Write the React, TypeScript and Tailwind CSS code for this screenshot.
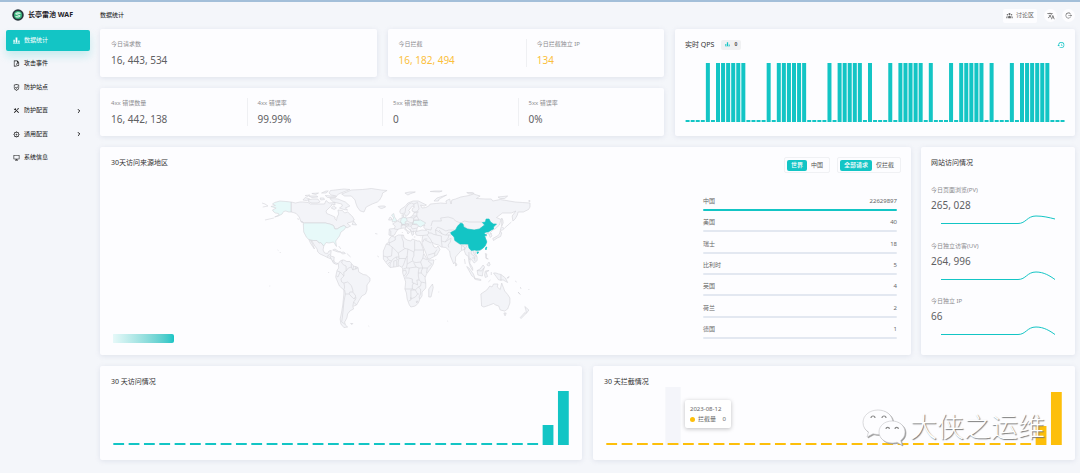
import type { ReactNode } from 'react'
import clsx from 'clsx'
import { HiUserGroup } from 'react-icons/hi'
import { MdHistory, MdTranslate } from 'react-icons/md'
import { RiFileShield2Line, RiLogoutCircleRLine, RiSettings5Line, RiShieldCheckLine, RiToolsFill, RiComputerLine } from 'react-icons/ri'
import { LuChevronRight } from 'react-icons/lu'

const TEAL = '#13c5c5'
const AMBER = '#fdbf0b'

function BarsIcon({ className }: { className?: string }) {
  return (
    <svg viewBox="0 0 16 16" className={className} fill="currentColor" aria-hidden="true">
      <path d="M1 6h3v7H1zM6 1h4v12H6zM12 8h3v5h-3zM0 14h16v1.5H0z" />
    </svg>
  )
}

const NAV: { label: string; icon: ReactNode; expandable?: boolean }[] = [
  { label: '数据统计', icon: <BarsIcon className="size-[7px]" /> },
  { label: '攻击事件', icon: <RiFileShield2Line className="size-[7px]" /> },
  { label: '防护站点', icon: <RiShieldCheckLine className="size-[7px]" /> },
  { label: '防护配置', icon: <RiToolsFill className="size-[7px]" />, expandable: true },
  { label: '通用配置', icon: <RiSettings5Line className="size-[7px]" />, expandable: true },
  { label: '系统信息', icon: <RiComputerLine className="size-[7px]" /> },
]

const REGIONS = [
  { name: '中国', count: 22629897 },
  { name: '美国', count: 40 },
  { name: '瑞士', count: 18 },
  { name: '比利时', count: 5 },
  { name: '英国', count: 4 },
  { name: '荷兰', count: 2 },
  { name: '德国', count: 1 },
]

const QPS_SAMPLES =
  '000010111111000010111111000010111110100010111110100010111110100010111111000'.split('')

const VISITS = [...Array(28).fill(2), 20, 54]
const BLOCKED = [...Array(28).fill(2), 19, 53]

const SITE_STATS = [
  { label: '今日页面浏览(PV)', value: '265, 028', curve: 'M0 11.500H77C85 11.500 86 4 95 4C102 4 108 5.500 114 7' },
  { label: '今日独立访客(UV)', value: '264, 996', curve: 'M0 11.500H77C85 11.500 86 4 95 4C103 4 109 8 114 11.500' },
  { label: '今日独立 IP', value: '66', curve: 'M0 11.500H77C85 11.500 86 4 95 4C103 4 109 8 114 11.500' },
]

// Land outlines, "lon,lat" pairs
const LAND = [
  // Canada and its islands
  '-141,70 -141,60 -138,59.5 -134,58.5 -130,55 -128,51 -123,49 -95,49 -89,48 -84,46.5 -82,43 -79,43 -75,45 -70,46.5 -67,45 -66,44 -61,46 -65,48 -65,49 -60,50 -56,52 -58,55 -62,58 -65,60 -69,59 -72,61.5 -78,62 -77,58 -79,55 -80,51.5 -82,53 -82,55 -88,57 -93,58.5 -94,61 -90,64 -87,66 -86,68 -82,67 -82,69.5 -90,69 -94,71.5 -96,68 -102,68 -108,68 -115,68 -118,69.5 -125,70 -129,70 -135,69',
  '-117,70 -118,72 -112,73 -105,73 -102,70 -106,69 -113,69',
  '-125,72 -122,74.5 -116,73 -120,71.5',
  '-62,66 -68,70 -78,73 -89,73.5 -84,70 -73,68 -72,66 -76,64 -70,62.5 -65,62 -68,64',
  '-62,82.5 -70,83 -88,81.5 -90,79 -87,77 -80,76 -77,78 -74,79',
  '-95,76.5 -80,75.5 -81,74.5 -92,74.5',
  '-117,76 -106,76 -105,75 -113,74.5',
  '-102,74 -97,74 -96,72.5 -101,72',
  '-100,79 -94,81 -91,81 -94,79',
  '-122,76.5 -116,77 -119,75.5',
  '-113,78.5 -104,79 -108,77.5',
  '-87,64 -84,66 -80,64 -83,62.5',
  '-59,47.5 -57,51 -53,47',
  '-128,50.5 -125,50 -124,48.5',
  // Greenland, Iceland, Svalbard
  '-73,78 -66,80 -60,82 -45,82.5 -33,83.5 -20,82 -12,81.5 -18,79 -19,76 -22,72 -25,70 -32,68 -40,65 -43,60 -48,61 -52,65 -54,69 -55,72 -60,76 -69,76',
  '-24,65.5 -20,66 -15,66 -14,65 -19,63.5 -22,64',
  '12,79 18,80 26,80 20,78.5 16,77',
  '46,80.5 52,81 62,81 58,80',
  // Mexico and Central America
  '-117,32.5 -111,31.5 -106,31.5 -103,29 -101,29.5 -97,26 -98,22 -96,19 -92,18.5 -90,21 -87,21.5 -88,16 -83,15 -83.5,11 -81,9 -77.5,8.5 -80,7.5 -84,9 -87,13 -92,14.5 -96,16 -102,18 -105,20 -106,23 -109,26 -113,31 -114.500,31.500 -112,28 -109.500,23 -112,25.500 -115,29',
  '-85,22 -82,23 -77,20.5 -74,20 -78,20',
  '-74,19.500 -70,20 -68,18.500 -72,18',
  // South America
  '-77.500,8.500 -75,11 -72,12 -70,12 -66,10.500 -62,10.500 -57,6 -51,4.500 -50,0 -44,-2.500 -40,-3 -35,-6 -35,-9 -39,-13 -39,-18 -41,-22 -46,-24 -48.500,-27 -53,-33 -58,-34.500 -57,-37 -62,-39 -65,-42 -66,-46 -69,-50 -68,-53 -65,-55 -70,-55.500 -74,-52 -75,-47 -73,-40 -71.500,-33 -70,-22 -70,-18 -76,-14 -80,-7 -81,-5 -80,-1 -79,2 -77,4',
  '-61,-51.500 -58,-51.500 -59,-52.500',
  // Europe and Asia
  '-9.500,37 -9,43 -2,43.500 -1,46 -4.500,48 -1.500,49.500 2,51 5,53.500 8.500,54 8,57 10.500,57.500 10,55 14,54 19,54.500 21,56 24,58 24,59.500 30,60 25,60 21.500,61 22,63.500 25,65 22,66 17,61.500 19,60 16,57 13,55.500 11,59 7,58 5,60 6,62.500 12,65.500 16,69 23,71 30,71 41,67 38,66 33,67 35,64 40,64.500 44,66 46,68 54,68.500 60,69 68,68.500 67,71 72,73 74,68 75,72 80,73 87,75 98,76.500 104,78 113,76 108,73.500 120,73 128,73 130,71 140,72.500 152,71 160,70 170,69.500 180,69 180,65 178,62.500 171,60 164,60 163,57 160,53 157,51 156,56 161,61 155,59 143,59 135,54.500 141,52.500 139,47 133,43 130,42 127,39.500 129,36 126.500,34.500 125,38 121,39 122,41 118,39 119,37 122,37 120,34 122,31 120,26 116,23 110,20.500 106,20 109,15 109,11.500 105,9 103,11 100,13.500 99,9 103,4 103,1.500 100,5 98,10 97,16 94,17 91,22.500 87,21 80,15 80,11 77.500,8 73,16 72,21 67,24.500 61,25 57,27 52,28 48,30 51,25 54,24 56.500,26 59,22.500 55,17 45,13 43,13 39,21 35,28 35,32 36,36.500 30,36.500 27,37 26,40 30,41 35,42 41,41.500 37,45 39,47 33,46 30,46 28,43 28,41 23,40.500 24,38 22,36.500 19,42 14,45 12,45 14,42 18.500,40 16,38 15,40.500 10,44 3,43 0,40 -2,37 -5.500,36',
  '-10,52 -8,55 -6,54 -6,52',
  '51,71 55,74 68,77 58,73 57,71',
  '95,79.500 103,79.500 105,78.500 98,78',
  '137,75 150,76 146,73.500 140,73.500',
  '178,71 180,71.500 180,70.500',
  '142,46 142,54 143.500,52 144,49',
  '140,41.500 141.500,45.500 145.500,43.500 143,42',
  '140,41 142,39 140.500,35.500 136,34 131,31.500 130,33.500 136,36 139,38',
  '80,9.500 82,7 80,6',
  '44,-25 47,-25 50,-15.500 49,-12 44,-17',
  // South-east Asia and Oceania
  '95,5.500 98,4 104,-2 106,-6 102,-4',
  '105,-6.500 108,-6.500 114,-7.500 114,-8.500 107,-7.500',
  '109,1.500 113,3 117,7 119,5 117,1 116,-4 110,-3',
  '120,1 125,1.500 121,0 123,-4.500 120,-5.500 119,-3',
  '120,18.500 122,18 121,14 124,13 121,13.500',
  '122,7 125,10 126.500,7 125,6',
  '131,-1 134,-1 138,-2 141,-2.500 147,-6 150,-10.500 144,-8 138,-8 134,-4',
  '149,-6 152,-4.500 151,-6',
  '114,-22 122,-18 126,-14 129,-15 131,-12 137,-12 136,-15 140,-17.500 142,-11 146,-19 150,-22.500 153,-26 153,-31 150,-37 146,-39 140,-38 138,-34 134,-33 131,-31.500 124,-33.500 118,-35 115,-34',
  '145,-41 148,-41 147,-43.500 146,-43.500',
  '173,-34.500 178.500,-38 175,-41.500 174.500,-38',
  '173,-40.500 174,-42 168,-46.500 167,-45.500',
  '164,-20 167,-22.500 166,-22',
  // Africa
  '-17,15 -17,21 -13,28 -9.500,30 -9.500,32.500 -6,36 -2,35 3,37 10,37 11,34 15,32 20,31 22,33 29,31 32,31 34,28 37,22 37,19 40,15 43,12 51,12 50,8 46,3 41,-2 39,-6 40,-11 40,-16 35,-20 35,-24 32,-27 30,-31 26,-34 20,-35 18,-33 15,-27 14,-21 12,-17 13,-10 9,-1 9,4 5,6 -2,5 -8,4.500 -13,9 -17,13',
]

const BORDERS = [
  // Americas
  '-92,14.5 -91,17 -89,17.500', '-89,16 -87,13', '-83,11 -86,11', '-83,9.500 -83,8.500',
  '-72,12 -73,9 -70,7 -67,6 -67,1 -70,0 -70,-4 -75,0 -79,1', '-60,8 -60,5 -64,4 -67,1', '-57,6 -58,2 -52,4 -51,4', '-60,5 -58,2', '-54,6 -54,2.500',
  '-70,-4 -74,-7 -73,-10 -70,-11 -69,-15 -70,-18', '-70,-11 -65,-10 -60,-13.500 -58,-18 -58,-20 -62,-20 -63,-22 -68,-22 -69,-18',
  '-58,-20 -54,-24 -56,-27 -58,-26 -63,-22', '-54,-25 -54,-27 -57,-30 -58,-34', '-57,-30 -53,-33', '-68,-22 -70,-30 -71,-38 -72,-45 -73,-50 -69,-52', '-80,-4 -78,-5 -75,0',
  // Africa
  '-13,28 -9,27 -9,30', '-9,27 -5,25 -6,16 -12,15 -17,16', '-5,25 3,19 12,23.500 16,23 24,20 25,22 37,22', '25,22 25,31.500', '-1,35 -1,32 -9,29', '8,37 8,34 10,30 10,25 12,23.500',
  '3,19 4,15 0,15 -4,13 -6,11 -10,12 -12,15', '16,23 15,16 13,13.500 4,13.500 4,15', '24,20 24,16 22,13 23,10 27,9.500 33,10 36,14 37,18', '15,16 15,8 14,4 10,3', '13,13.500 10,7 8,5', '4,13.500 3,10 3,6', '1,11 1,6', '-3,11 -3,5', '-6,11 -8,8 -8,5', '-11,12 -13,10', '-8,10 -11,8', '0,15 2,12 -3,11',
  '15,8 22,11', '14,4 18,4 27,5 24,9', '27,5 31,4 36,4 34,8 33,10', '36,14 42,12', '36,4 42,4 48,8 43,11', '42,4 41,-1', '36,4 34,1 34,-1 39,-5', '31,4 30,0 30,-4 31,-8', '34,-1 30,-1',
  '18,4 17,-1 13,-5', '9,1 13,2 14,-1 11,-4', '12,-6 17,-6 22,-7 22,-11 24,-11 22,-13 22,-17 12,-17', '24,-11 29,-13 28,-8 31,-8 34,-10 40,-11', '34,-10 33,-14 30,-15 26,-18 22,-17', '30,-15 33,-17 33,-22 31,-25 32,-27', '26,-18 29,-22 31,-22', '29,-22 26,-25 20,-27 20,-18 25,-18', '20,-25 20,-28 17,-29', '27,-29.500 29,-29 28,-31 27,-29.500',
  // Europe
  '-9,42 -7,41 -7,37', '-2,43 3,42.500', '2,51 6,49.500 8,49 7,46 7,44', '7,46 10,47 13,46.500 14,45', '8,47.500 13,47.500 17,48 16,46 13,46', '15,51 19,49.500 23,49 24,54 19,54.500', '13,49 17,48 22,48 28,47', '16,46 20,46 22,43 28,44', '20,46 23,48', '19,43 21,40 24,41', '23,52 31,52 28,56 22,56', '28,56 28,59', '24,54 28,56', '21,69 24,68 24,66', '12,59 13,64 17,68 21,69', '24,68 29,69.500 30,66 31,63 28,60.500',
  // Middle East and Central Asia
  '36,36.500 42,37 44,39 43,41', '42,37 47,32 48,30', '44,39 48,39 49,38 54,37 61,36 61,31 62,25', '40,43 47,42 48,45', '42,33 38,33 36,30', '39,32 47,29', '43,17 52,19 55,22.500', '52,19 52,16', '54,37 53,42 56,41 62,38 66,37 71,37 74,37',
  '47,46 49,51 55,51 61,51 60,54 70,55 77,53.500 80,51 87,49', '53,42 56,45 62,43 67,41 71,42 80,42', '62,38 58,42', '67,37 71,40 74,39', '61,31 66,30 70,34 71,37', '66,30 74,34 73,30 70,27 71,24.500', '81,30 88,27 88,22', '88,27 92,27 97,28', '89,26 92,25 92,22', '92,22 95,26 97,28',
  '87,49 92,51 98,50 105,50 116,50', '88,49 96,43 105,42 112,43 119,47', '98,20 98,16 99,12', '101,21 101,18 105,16 106,11', '103,22 105,18 108,15', '102,14 107,14', '109,1.500 115,1 118,4', '141,-2.500 141,-9', '126,38 128.500,38.500',
]

const TINTED = [
  // Alaska, mainland United States, United Kingdom, Germany, Ukraine
  '-141,60 -141,70 -148,70.5 -156,71 -163,69.5 -166,68 -162,66.5 -168,65.5 -161,64 -166,62 -164,60 -162,59 -158,58.5 -157,57 -163,55 -158,56 -153,58 -151,60.5 -148,61 -144,60',
  '-124.500,48 -123,49 -95,49 -89,48 -84,46.500 -82,43 -79,43 -75,45 -70,46.500 -67,45 -70,42 -74,40 -76,36 -81,31 -80,25.500 -82,28 -84,30 -90,29 -94,29.500 -97,26 -101,29.500 -103,29 -106,31.500 -111,31.500 -117,32.500 -120,34.500 -124,40',
  '-5,50 1,51 0,53 -2,55 -3,58.500 -6,57 -3,54 -5,52',
  '6,50 7,53.500 10,54.500 14,54 15,51 12,50 13,48 8,47.500',
  '22,48 24,51.500 33,52 40,49 37,47 33,45 30,46 28,48',
]

const CHINA = [
  '73.500,39.500 74,38 78,35 79,31.500 82,30 86,28 92,28 97,28 98,24 101,21.500 106,22 108,21.500 113,22 117,24 120,26.500 122,30 120,34 119,36 122,37 118,38.500 121,40 124,40 128,42 131,43 131,45 135,48 131,48 127,50 125,53 121,53 120,50 116,49.500 119,47 112,43 105,42 96,43 91,45 90,48 87,49 84,47 82,45 80,42',
  '109,20 111,20 110,18.500 109,18.500',
  '120,23 121,25 122,25 121,22',
]

const ISLETS = [
  '-156,20 -155,19', '-159,22 -158,21.500', '-170,-14 -169,-14', '-91,0 -90,-1', '-176,52 -170,53 -164,54', '178,-17 179,-18', '160,-9 162,-10', '167,-15 168,-17', '-66,18.500 -61,15', '-25,16 -23,15', '-28,38.500 -25,38', '57,-20 58,-20', '69,-49 70,-49.500', '-37,-54 -36,-54.500', '8,40 9,39', '24,35 26,35', '33,35 34,35', '53,12.500 54,12.500', '92,13 93,8', '127,-8 124,-10', '128,0 128,-3', '146,44 155,50', '-179,65 -172,66 -176,68 -180,69', '-132,54 -131,52', '-77,26 -74,23',
]

function WorldMap() {
  return (
    <svg viewBox="-180 -83 360 140" preserveAspectRatio="none" className="block w-[268px] h-[140px] overflow-visible" role="img" aria-label="世界地图">
      <g transform="scale(1 -1)" stroke="#d3d4d8" strokeWidth={0.6} strokeLinejoin="round">
        {LAND.map((points) => (
          <polygon key={points} points={points} fill="#f3f4f8" vectorEffect="non-scaling-stroke" />
        ))}
        {TINTED.map((points) => (
          <polygon key={points} points={points} fill="#e7f9f9" vectorEffect="non-scaling-stroke" />
        ))}
        {[...BORDERS, ...ISLETS].map((points) => (
          <polyline key={points} points={points} fill="none" vectorEffect="non-scaling-stroke" />
        ))}
        {CHINA.map((points) => (
          <polygon key={points} points={points} fill={TEAL} stroke={TEAL} vectorEffect="non-scaling-stroke" />
        ))}
      </g>
    </svg>
  )
}

function Card({ className, children }: { className?: string; children: ReactNode }) {
  return (
    <section className={clsx('min-w-0 rounded-xs bg-[#fdfdff] shadow-[0_1px_5px_rgba(140,150,180,0.2)]', className)}>
      {children}
    </section>
  )
}

function CardTitle({ children }: { children: ReactNode }) {
  return <h2 className="text-[7px] leading-[11px] text-[#333]">{children}</h2>
}

type Stat = { label: string; value: string }

function StatCard({ stats, warn }: { stats: Stat[]; warn?: boolean }) {
  return (
    <Card className="grid auto-cols-fr grid-flow-col px-[11px] py-[10px]">
      {stats.map((stat, i) => (
        <div key={stat.label} className={clsx('h-7', i > 0 && 'pl-[10px] border-l border-[#eff0f3]')}>
          <div className="pt-px text-[6px] leading-[8px] text-[#8c8c90]">{stat.label}</div>
          <div className={clsx('mt-[5px] text-[10px] leading-[14px]', warn ? 'text-[#fbbf3c]' : 'text-[#5f6063]')}>{stat.value}</div>
        </div>
      ))}
    </Card>
  )
}

function DayChart({ values, color, hover }: { values: number[]; color: string; hover?: number }) {
  return (
    <svg viewBox="0 0 460 58" preserveAspectRatio="none" className="block w-full h-[58px]" aria-hidden="true">
      {hover !== undefined && <rect x={(hover * 460) / 30} width={460 / 30} height={58} fill="#f4f5fa" />}
      {values.map((v, i) => (
        <rect key={i} x={(i * 460) / 30 + 2.3} y={58 - v} width={10.8} height={v} fill={color} />
      ))}
    </svg>
  )
}

function Switcher({ options }: { options: string[] }) {
  return (
    <div className="flex h-4 items-center rounded-xs border border-[#f0f1f4] px-[2px] text-[6px] leading-[8px]">
      {options.map((option, i) => (
        <button
          key={option}
          type="button"
          className={clsx('h-[11px] rounded-xs px-1', i === 0 ? 'bg-[#13c5c5] font-medium text-white' : 'text-[#555]')}
        >
          {option}
        </button>
      ))}
    </div>
  )
}

function Sidebar() {
  return (
    <aside className="w-[95px] shrink-0 pl-[6px] pr-[5px]">
      <div className="flex h-[26px] items-center gap-1 pl-[6px] text-[7px] font-bold text-[#1f2329]">
        <svg viewBox="0 0 24 24" className="size-3" aria-hidden="true">
          <circle cx="12" cy="12" r="11.5" fill="#26323a" />
          <circle cx="12" cy="12" r="8" fill="#35b27a" />
          <path d="M6 10c2-4 9-5 12-1l-4 1c-2-1-4-1-5 0l8 3c0 4-8 6-11 2l4-1c2 1 3 1 4 0z" fill="#d9f5e6" />
        </svg>
        长亭雷池 WAF
      </div>
      <nav className="mt-[2px] flex h-[138px] flex-col justify-between">
        {NAV.map((item, i) => (
          <a
            key={item.label}
            href="#"
            className={clsx(
              'flex h-[21px] items-center gap-1 rounded-xs pl-[7px] pr-[8px] text-[6px]',
              i === 0 ? 'bg-[#13c5c5] text-white shadow-[0_5px_8px_rgba(19,197,197,0.2)]' : 'text-[#111]',
            )}
          >
            {item.icon}
            <span>{item.label}</span>
            {item.expandable && <LuChevronRight className="ml-auto size-[6px]" strokeWidth={4} />}
          </a>
        ))}
      </nav>
    </aside>
  )
}

function Header() {
  return (
    <header className="flex h-[27px] items-center text-[6px]">
      <h1 className="text-[#111]">数据统计</h1>
      <div className="ml-auto flex items-center gap-[5px] text-[#666]">
        <button type="button" className="mr-[2px] flex h-[14px] items-center gap-[3px] rounded-xs bg-[#fdfdff] px-[3px]">
          <HiUserGroup className="size-[7px]" />
          讨论区
        </button>
        <button type="button" aria-label="语言" className="flex size-[13px] items-center justify-center rounded-full bg-[#fdfdff]">
          <MdTranslate className="size-[8px]" />
        </button>
        <button type="button" aria-label="退出" className="flex size-[13px] items-center justify-center rounded-full bg-[#fdfdff]">
          <RiLogoutCircleRLine className="size-[7px]" />
        </button>
      </div>
    </header>
  )
}

function QpsCard() {
  const step = 380 / QPS_SAMPLES.length
  return (
    <Card className="px-[10px] pt-[10px] pb-[14px]">
      <div className="flex h-[11px] items-center">
        <CardTitle>实时 QPS</CardTitle>
        <span className="ml-[7px] flex h-[10px] w-5 items-center justify-center gap-1 rounded-xs bg-[#f0f1f3] text-[5px] font-bold text-[#555]">
          <BarsIcon className="size-[5px] text-[#13c5c5]" />0
        </span>
        <button type="button" aria-label="历史" className="ml-auto text-[#13c5c5]">
          <MdHistory className="size-[8px]" />
        </button>
      </div>
      <svg viewBox="0 0 380 59" preserveAspectRatio="none" className="mt-[13px] block h-[59px] w-full" aria-hidden="true">
        {QPS_SAMPLES.map((s, i) => {
          const h = s === '1' ? 59 : 2
          return <rect key={i} x={i * step + 0.6} y={59 - h} width={4} height={h} fill={TEAL} />
        })}
      </svg>
    </Card>
  )
}

function SourceCard() {
  return (
    <Card className="pt-[10px] pb-3">
      <div className="flex h-4 items-start pl-[11px] pr-[10px]">
        <CardTitle>30天访问来源地区</CardTitle>
        <div className="ml-auto flex gap-[7px]">
          <Switcher options={['世界', '中国']} />
          <Switcher options={['全部请求', '仅拦截']} />
        </div>
      </div>
      <div className="flex gap-[22px] pl-[11px] pr-[14px]">
        <div className="flex-1 pt-4">
          <div className="flex justify-center">
            <WorldMap />
          </div>
          <div className="ml-[2px] mt-[5px] h-[9px] w-[61px] rounded-r-xs bg-linear-to-r from-[#e6f9f9] to-[#13c5c5]" />
        </div>
        <ul className="mt-[23px] flex h-[143px] w-[194px] flex-col justify-between text-[6px] leading-[10px] text-[#666]">
          {REGIONS.map((region, i) => (
            <li key={region.name}>
              <div className="flex justify-between">
                <span>{region.name}</span>
                <span>{region.count}</span>
              </div>
              <div className={clsx('mt-[3px] h-[2px] rounded-full', i === 0 ? 'bg-[#13c5c5]' : 'bg-[#e3e8f1]')} />
            </li>
          ))}
        </ul>
      </div>
    </Card>
  )
}

function SiteCard() {
  return (
    <Card className="flex flex-col px-[10px] pt-[10px] pb-5">
      <CardTitle>网站访问情况</CardTitle>
      <div className="mt-[18px] flex flex-1 flex-col justify-between">
        {SITE_STATS.map((stat) => (
          <div key={stat.label}>
            <div className="text-[6px] leading-[8px] text-[#8c8c90]">{stat.label}</div>
            <div className="mt-1 text-[10px] leading-[14px] text-[#5f6063]">{stat.value}</div>
            <svg viewBox="0 0 114 12" preserveAspectRatio="none" className="ml-[10px] block h-3 w-[114px]" fill="none" stroke={TEAL} strokeWidth={1} aria-hidden="true">
              <path d={stat.curve} />
            </svg>
          </div>
        ))}
      </div>
    </Card>
  )
}

function Watermark() {
  return (
    <div className="pointer-events-none absolute right-[30px] bottom-[14px] flex items-center gap-1">
      <svg viewBox="0 0 44 38" className="h-[38px] w-11 drop-shadow-[1px_1px_0_#999]" fill="#fdfdff" stroke="#c4c4c8" strokeWidth={0.6} aria-hidden="true">
        <path d="M16 2C7.500 2 1 7.500 1 14.500c0 4 2 7.500 5.500 9.500L5 29l6-3.200c5 1.400 10 .7 14-1.800 4-2.500 6-6 5.800-10C30.500 7 24 2 16 2z" />
        <path d="M30 13c-7.500 0-13 5-13 11s5.500 11 13 11c2 0 3.500-.2 5-.8L40 37l-1.300-4.500C41.500 30.500 43 27.500 43 24c0-6-5.500-11-13-11z" />
        <path d="M9 10a2 2 0 0 1 4 0M20 10a2 2 0 0 1 4 0M24 21a1.700 1.700 0 0 1 3.400 0M33 21a1.700 1.700 0 0 1 3.400 0" fill="none" stroke="#888" strokeWidth={1.2} />
      </svg>
      <span className="text-[27px] leading-[38px] font-light text-white [text-shadow:1px_1px_1px_#777]">大侠之运维</span>
    </div>
  )
}

export default function App() {
  return (
    <div className="min-h-screen border-t-2 border-[#a3bfd9] bg-[#f4f6fa] font-['Noto_Sans','Noto_Sans_CJK_SC',sans-serif]">
      <div className="flex">
        <Sidebar />
        <main className="min-w-0 flex-1 px-[5px] pb-[13px]">
          <Header />
          <div className="grid gap-[11px]">
            <div className="grid grid-cols-[564fr_400fr] gap-[11px]">
              <div className="grid gap-[11px]">
                <div className="grid grid-cols-2 gap-[11px]">
                  <StatCard stats={[{ label: '今日请求数', value: '16, 443, 534' }]} />
                  <StatCard
                    warn
                    stats={[
                      { label: '今日拦截', value: '16, 182, 494' },
                      { label: '今日拦截独立 IP', value: '134' },
                    ]}
                  />
                </div>
                <StatCard
                  stats={[
                    { label: '4xx 错误数量', value: '16, 442, 138' },
                    { label: '4xx 错误率', value: '99.99%' },
                    { label: '5xx 错误数量', value: '0' },
                    { label: '5xx 错误率', value: '0%' },
                  ]}
                />
              </div>
              <QpsCard />
            </div>

            <div className="grid grid-cols-[1fr_154px] gap-[10px]">
              <SourceCard />
              <SiteCard />
            </div>

            <div className="grid grid-cols-2 gap-[11px]">
              <Card className="px-[11px] pt-[10px] pb-[15px]">
                <CardTitle>30 天访问情况</CardTitle>
                <DayChart values={VISITS} color={TEAL} />
              </Card>
              <Card className="relative px-[11px] pt-[10px] pb-[15px]">
                <CardTitle>30 天拦截情况</CardTitle>
                <DayChart values={BLOCKED} color={AMBER} hover={4} />
                <div className="absolute left-[92px] top-[34px] w-[46px] rounded-xs bg-white px-[5px] py-[4px] text-[6px] leading-[10px] text-[#666] shadow-[0_1px_4px_rgba(0,0,0,0.25)]">
                  <div>2023-08-12</div>
                  <div className="flex items-center">
                    <span className="mr-[3px] size-[5px] rounded-full bg-[#fdbf0b]" />
                    拦截量
                    <span className="ml-auto">0</span>
                  </div>
                </div>
                <Watermark />
              </Card>
            </div>
          </div>
        </main>
      </div>
    </div>
  )
}
